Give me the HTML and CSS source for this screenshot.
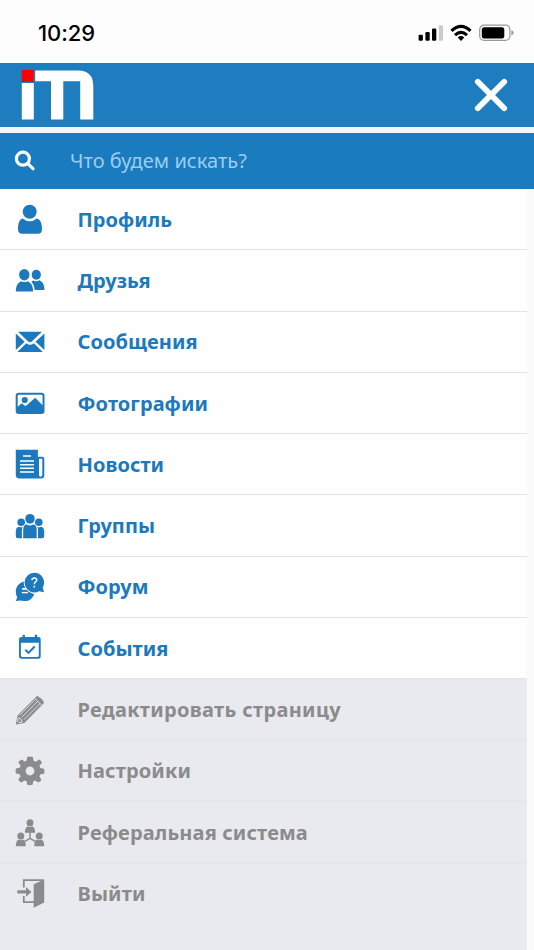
FILE: index.html
```html
<!DOCTYPE html>
<html lang="ru">
<head>
<meta charset="utf-8">
<meta name="viewport" content="width=device-width, initial-scale=1">
<title>Меню</title>
<link rel="stylesheet" href="styles.css">
</head>
<body>
<div class="status">
  <time class="clock">10:29</time>
  <svg class="indicators" viewBox="0 0 98 20" aria-hidden="true">
    <rect x=".6" y="11.8" width="4.3" height="6" rx="1.2"/>
    <rect x="7.4" y="9" width="4.3" height="8.8" rx="1.2"/>
    <rect x="14" y="5.5" width="4.3" height="12.3" rx="1.2"/>
    <rect x="20.8" y="2.2" width="4.2" height="15.6" rx="1.2" fill="#cacaca"/>
    <g fill="none" stroke="#000" stroke-width="3.1">
      <path d="M33.5 7.8Q43-1.2 52.5 7.8"/>
      <path d="M37 12.2Q43 6.7 49 12.2"/>
    </g>
    <path d="M39.7 14.4Q43 11.8 46.3 14.4L43 18z"/>
    <rect x="61.7" y="2.2" width="30.2" height="15.2" rx="4.4" fill="none" stroke="#999" stroke-width="1.2"/>
    <rect x="63.8" y="4.2" width="22.5" height="11.2" rx="2.5"/>
    <path d="M93.4 7.2Q95.7 8 95.7 9.8T93.4 12.4z" fill="#999"/>
  </svg>
</div>
<header class="header">
  <svg class="logo" viewBox="0 0 74 52" role="img" aria-label="im">
    <rect x=".8" y="1" width="11.8" height="11.8" fill="#f00"/>
    <path d="M.8 14h12v36.6H.8zM14.2 1.4H57Q72.3 1.4 72.3 17V50.6H59.2V12.2H42.3V50.6H30V12.2H14.2z" fill="#fff"/>
  </svg>
  <button class="close" aria-label="Закрыть">
    <svg viewBox="0 0 36 36"><path d="M4.8 4.8 31.2 31.2M31.2 4.8 4.8 31.2"/></svg>
  </button>
</header>
<form class="search">
  <svg class="search-icon" viewBox="0 0 22 22"><circle cx="8.9" cy="8.7" r="6.5"/><path d="m13.8 13.6 5.2 5.1"/></svg>
  <input class="search-field" type="text" placeholder="Что будем искать?">
</form>
<nav class="menu">
  <a class="item"><svg class="icon" viewBox="0 0 30 30"><circle cx="14.7" cy="7.7" r="7"/><path d="M7.7 14.4Q14.7 20.2 21.8 14.4C25.8 15.5 27 19.5 27 25.5Q27 29.7 22.5 29.7H7.5Q3 29.7 3 25.5C3 19.5 4 15.5 7.7 14.4z"/></svg><span>Профиль</span></a>
  <a class="item"><svg class="icon" viewBox="0 0 30 30"><ellipse cx="9.3" cy="9.7" rx="5.2" ry="5.7"/><path d="M.8 26.5C1 20.5 2.8 17.8 6 16.2Q9.4 18 12.7 16.2C16.2 17.8 18 20.5 18.2 26.5z"/><ellipse cx="21.3" cy="9.8" rx="4.6" ry="5"/><path d="M16.3 16.7 18.3 15.5Q21.4 17 24.4 15.3C27.8 17 29.3 19.4 29.5 25H19.7C19.4 21.2 18.5 18.8 16.3 16.7z"/></svg><span>Друзья</span></a>
  <a class="item"><svg class="icon" viewBox="0 0 30 30"><path d="M3 4.7H27L16.8 14.5Q15 16.1 13.2 14.5zM.8 6.4 9.7 14.8.8 22.9zM29.4 6.4 20.5 14.8 29.4 22.9zM11.3 16.2Q15 19.5 18.9 16.2L27.8 24.9H2.4z"/></svg><span>Сообщения</span></a>
  <a class="item"><svg class="icon" viewBox="0 0 30 30"><rect x="1.7" y="5.8" width="26.8" height="19.3" rx="2" fill="none" stroke="currentColor" stroke-width="2"/><circle cx="9.7" cy="12" r="3.1"/><path d="M2 19.3 6.8 15.3 10.5 18.2 20.2 9.8 28.3 18.1V25H2z"/></svg><span>Фотографии</span></a>
  <a class="item"><svg class="icon" viewBox="0 0 30 30"><path d="M.8.7H22.9V7.7H27.2Q29.3 7.7 29.3 10V26.5Q29.3 29.4 26.3 29.4H4.3Q.8 29.4.8 26zM24 9.8V26Q24 27.8 25.5 27.8T27.3 26V9.8z" fill-rule="evenodd"/><path d="M8 7H16M5 12H19M5 15.7H19M5 19.3H19M5 23H19" fill="none" stroke="#fff" stroke-width="1.5"/></svg><span>Новости</span></a>
  <a class="item"><svg class="icon" viewBox="0 0 30 30"><circle cx="6.2" cy="11.3" r="3.8"/><circle cx="23.8" cy="11.3" r="3.8"/><ellipse cx="15" cy="7.8" rx="4.7" ry="4.9"/><path d="M8.2 27.3V19Q8.2 13.5 12 13.5Q15 15.3 18 13.5Q21.7 13.5 21.7 19V27.3zM6.9 27.3H2.8Q.8 27.3.8 25V20.5Q.8 16.2 4 15.7Q5.5 16.5 7.6 16.1Q6.9 17.5 6.9 19zM23 27.3H27.2Q29.2 27.3 29.2 25V20.5Q29.2 16.2 26 15.7Q24.5 16.5 22.4 16.1Q23 17.5 23 19z"/></svg><span>Группы</span></a>
  <a class="item"><svg class="icon" viewBox="0 0 30 30"><path d="M8.7 9.6C3.5 11.5.8 15 .8 20Q.8 23 2.3 25.2L.8 29Q6 28.1 8.8 29Q16 30 19.2 22.2Q14 21 11.5 17.8H7V15.9H10.2Q8.5 13 8.7 9.6z"/><path d="M6.8 20.6H13" stroke="#fff" stroke-width="1.4"/><path d="M19.3.8A9.8 9.8 0 0 0 19.3 20.4Q22 20.4 24 19.2L29 20.2 27.7 15.6A9.8 9.8 0 0 0 19.3.8z"/><path d="M16.9 8.1Q17.1 6 19.4 6T21.7 8C21.7 9.8 19.3 9.8 19.3 12.2M19.3 13.8V15.5" fill="none" stroke="#fff" stroke-width="1.5"/></svg><span>Форум</span></a>
  <a class="item"><svg class="icon" viewBox="0 0 30 30"><path d="M7.6 1.7H9.9V4H19.8V1.7H22.2V4H23.5Q25.7 4 25.7 6.2V23.4Q25.7 25.7 23.5 25.7H6.3Q4 25.7 4 23.4V6.2Q4 4 6.3 4H7.6zM5.9 9.8V22.8Q5.9 23.9 7 23.9H22.7Q23.8 23.9 23.8 22.8V9.8z" fill-rule="evenodd"/><path d="m10.3 16.8 3.2 3.1 6.2-6.4" fill="none" stroke="currentColor" stroke-width="2"/></svg><span>События</span></a>
  <div class="secondary">
    <a class="item"><svg class="icon" viewBox="0 0 30 30"><path d="M22.2.7Q26.5 2.8 29.2 7.7L9.4 27.9.8 29.4 2.5 20.6z"/><path d="M6.5 22.5 22.5 6.5M8.8 24.8 24.8 8.8M4.5 20.3 20.3 4.5" fill="none" stroke="#e9eaef" stroke-width=".8"/><path d="m19.7 3.3 7 7M3.2 22.8Q6.5 23.2 7.2 27L4 27.6 2.5 26z" fill="none" stroke="#e9eaef" stroke-width=".9"/></svg><span class="wide">Редактировать страницу</span></a>
    <a class="item"><svg class="icon" viewBox="0 0 30 30"><path fill-rule="evenodd" d="M12.2 1Q15 .1 17.8 1L18.6 4.8 20.8 5.7 24 3.5Q26.6 4.9 27 6.9L24.4 9.6 25.3 12 29 12.7Q29.8 15 29 17.8L25.2 18.4 24.4 20.5 26.5 23.8Q25.5 26 23.2 26.6L20.4 24.4 18.3 25.3 17.7 28.8Q15 29.7 12.2 28.8L11.6 25.3 9.5 24.4 6.4 26.5Q4 25.5 3.3 23.2L5.5 20.4 4.6 18.3 1 17.6Q.2 15 1 12.4L4.7 11.7 5.6 9.6 3.4 6.6Q4.3 4.3 6.7 3.5L9.6 5.6 11.5 4.8zM15 10.6A4.4 4.4 0 1 0 15 19.4 4.4 4.4 0 1 0 15 10.6z"/></svg><span>Настройки</span></a>
    <a class="item"><svg class="icon" viewBox="0 0 30 30"><circle cx="15" cy="5.7" r="3.5"/><path d="M9.8 15.7Q9.8 10.3 13 9.2Q15 10.6 17 9.2Q20.2 10.3 20.2 15.7z"/><circle cx="5.8" cy="19" r="3.5"/><path d="M.8 29.3Q.8 23.7 3.8 22.5Q5.8 24 7.8 22.5Q10.8 23.7 10.8 29.3z"/><circle cx="24.2" cy="19" r="3.5"/><path d="M19.2 29.3Q19.2 23.7 22.2 22.5Q24.2 24 26.2 22.5Q29.2 23.7 29.2 29.3z"/><path d="M15 15V21.5M9 24.8 15 21.3 21 24.8" fill="none" stroke="currentColor" stroke-width="1.5"/></svg><span>Реферальная система</span></a>
    <a class="item"><svg class="icon" viewBox="0 0 30 30"><path d="M29.2 1.5V24.4L18.7 29.8V6.3z"/><path d="M8.8 9.5V2.2H28.5M8.8 18V24.2H19" fill="none" stroke="currentColor" stroke-width="1.8"/><path d="M2.3 12.3H11V9.1L16.5 13.9 11 18.7V15.6H2.3z"/></svg><span>Выйти</span></a>
  </div>
</nav>
</body>
</html>
```
FILE: styles.css
```css
* { box-sizing: border-box; }

body {
  margin: 0;
  height: 950px;
  display: flex;
  flex-direction: column;
  overflow: hidden;
  background: #fafafb;
  font-family: "Noto Sans", "Open Sans", sans-serif;
}

.status {
  flex: none;
  height: 63px;
  padding: 3px 18px 0 38px;
  display: flex;
  align-items: center;
  justify-content: space-between;
  background: #fdfdfd;
}

.clock {
  font: 500 22px/30px Inter, sans-serif;
  letter-spacing: -0.1px;
  color: #000;
}

.indicators { width: 98px; height: 20px; }

.header {
  flex: none;
  height: 64px;
  padding: 0 25px 0 20.5px;
  display: flex;
  align-items: center;
  justify-content: space-between;
  background: #1d7dbe;
}

.logo { width: 74px; height: 52px; }

.close {
  padding: 0;
  border: 0;
  background: none;
  line-height: 0;
}

.close svg {
  width: 36px;
  height: 36px;
  fill: none;
  stroke: #fff;
  stroke-width: 5.8;
  stroke-linecap: round;
}

.search {
  flex: none;
  height: 62px;
  margin: 0;
  padding-left: 14px;
  border-top: 6px solid #f5f6fb;
  display: flex;
  align-items: center;
  gap: 34px;
  background: #1b7bbf;
}

.search-icon {
  width: 22px;
  height: 22px;
  fill: none;
  stroke: #fff;
  stroke-width: 3.2;
  stroke-linecap: round;
}

.search-field {
  flex: 1;
  padding: 0;
  border: 0;
  outline: 0;
  background: none;
  font: 400 20px/28px "Noto Sans", sans-serif;
  letter-spacing: 0.05px;
  color: #fff;
}

.search-field::placeholder { color: #9bcdef; opacity: 1; }

.menu {
  flex: 1;
  min-height: 0;
  width: 527px;
  display: flex;
  flex-direction: column;
  background: #fefefe;
}

.item {
  flex: none;
  height: 61.3px;
  padding-left: 15px;
  border-bottom: 1.3px solid #e3e4e6;
  display: flex;
  align-items: center;
  gap: 32.5px;
  color: #1c79bd;
  font-size: 20px;
  font-weight: 700;
  letter-spacing: 0.06px;
  white-space: nowrap;
}

.icon { width: 30px; height: 30px; fill: currentColor; }

.secondary { flex: 1; background: #e9eaef; }

.secondary .item { color: #8b8b8c; border-color: #e3e3e9; letter-spacing: 0.14px; }

.secondary .wide { letter-spacing: 0.32px; }

.secondary .item:last-child { border-color: transparent; }
```
